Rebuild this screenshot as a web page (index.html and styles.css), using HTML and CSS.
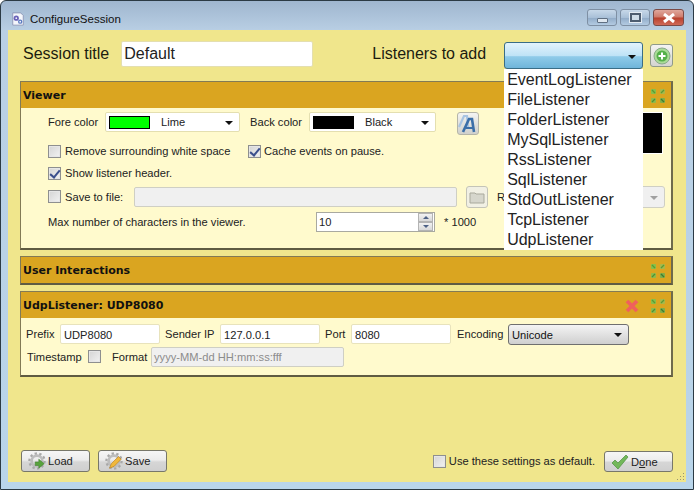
FILE: index.html
```html
<!DOCTYPE html>
<html lang="en">
<head>
    <meta charset="UTF-8">
    <meta name="viewport" content="width=device-width, initial-scale=1.0">
    <title>ConfigureSession</title>
    <link rel="stylesheet" href="styles.css">
</head>
<body>

<svg class="svgDefs" width="0" height="0">
    <defs>
        <symbol id="collapseIcon" viewBox="0 0 16 16">
            <rect x="1" y="1" width="5" height="5" rx="1" fill="#86c04a"/>
            <path d="M2 2l3 3" stroke="#5b9a35" stroke-width="1.200"/>
            <rect x="10" y="1" width="5" height="5" rx="1" fill="#a6b94a"/>
            <path d="M11 5l3-3" stroke="#5b9a35" stroke-width="1.200"/>
            <rect x="1" y="10" width="5" height="5" rx="1" fill="#8ebb4a"/>
            <path d="M2 14l3-3" stroke="#4f8f33" stroke-width="1.200"/>
            <rect x="10" y="10" width="5" height="5" rx="1" fill="#7fae48"/>
            <path d="M11 11l3 3" stroke="#3f7a30" stroke-width="1.200"/>
        </symbol>
        <symbol id="gearIcon" viewBox="0 0 20 20">
            <circle cx="10" cy="10" r="6" fill="none" stroke="#bdbdbd" stroke-width="3"/>
            <circle cx="10" cy="10" r="8.500" fill="none" stroke="#a8a8a8" stroke-width="2.400" stroke-dasharray="2.600 2.700"/>
        </symbol>
    </defs>
</svg>

<div class="window">
    <!-- Title bar -->
    <div class="titleBar">
        <svg class="appIcon" width="14" height="14" viewBox="0 0 16 16">
            <path d="M2 1h9l3 3v11H2z" fill="#f4f6fb" stroke="#8a93b5"/>
            <circle cx="6" cy="7" r="3" fill="#6a62b8"/>
            <circle cx="6" cy="7" r="1" fill="#f4f6fb"/>
            <circle cx="10.500" cy="11" r="2.500" fill="#5a7ac0"/>
            <circle cx="10.500" cy="11" r="1" fill="#f4f6fb"/>
        </svg>
        <span class="titleText">ConfigureSession</span>
        <div class="captionButtons">
            <div class="captionBtn minBtn"><span class="minGlyph"></span></div>
            <div class="captionBtn maxBtn"><span class="maxGlyph"></span></div>
            <div class="captionBtn closeBtn">
                <svg width="14" height="10" viewBox="0 0 14 10"><path d="M2 1l10 8M12 1L2 9" stroke="#fff" stroke-width="3"/></svg>
            </div>
        </div>
    </div>

    <div class="client">
        <!-- Session title and listeners -->
        <div class="topRow">
            <label class="bigLabel">Session title</label>
            <input class="titleInput" type="text" value="Default">
            <label class="bigLabel listenersLabel">Listeners to add</label>
            <div class="listenerCombo">
                <span class="arrow"></span>
                <ul class="listenerList">
                    <li>EventLogListener</li>
                    <li>FileListener</li>
                    <li>FolderListener</li>
                    <li>MySqlListener</li>
                    <li>RssListener</li>
                    <li>SqlListener</li>
                    <li>StdOutListener</li>
                    <li>TcpListener</li>
                    <li>UdpListener</li>
                </ul>
            </div>
            <button class="addBtn">
                <svg width="18" height="18" viewBox="0 0 18 18">
                    <circle cx="9" cy="9" r="8" fill="#a9dc97" stroke="#8aa98a"/>
                    <circle cx="9" cy="9" r="5.500" fill="#55b04a"/>
                    <path d="M9 5.500v7M5.500 9h7" stroke="#fff" stroke-width="2"/>
                </svg>
            </button>
        </div>

        <!-- Viewer -->
        <div class="panel viewerPanel">
            <div class="panelHeader">
                <span class="panelTitle">Viewer</span>
                <svg class="collapse" width="16" height="16"><use href="#collapseIcon"/></svg>
            </div>
            <div class="panelBody viewerBody">
                <div class="viewerPreview"></div>
                <div class="row colorRow">
                    <span class="foreLabel">Fore color</span>
                    <div class="colorCombo foreCombo">
                        <span class="swatch limeSwatch"></span>
                        <span class="colorName">Lime</span>
                        <span class="arrow"></span>
                    </div>
                    <span class="backLabel">Back color</span>
                    <div class="colorCombo backCombo">
                        <span class="swatch blackSwatch"></span>
                        <span class="colorName">Black</span>
                        <span class="arrow"></span>
                    </div>
                    <button class="fontBtn">
                        <svg width="20" height="20" viewBox="0 0 20 20">
                            <path d="M1 13L6 2h3l1 11" fill="none" stroke="#a9c4e2" stroke-width="2.200"/>
                            <path d="M5 18l6-13h3l2 13" fill="none" stroke="#3c6fa8" stroke-width="2.600"/>
                            <path d="M8 14h7" stroke="#3c6fa8" stroke-width="2"/>
                        </svg>
                    </button>
                </div>
                <div class="row checkRow firstCheck">
                    <span class="check"></span>
                    <span class="removeLabel">Remove surrounding white space</span>
                    <span class="check checked"></span>
                    <span>Cache events on pause.</span>
                </div>
                <div class="row checkRow showRow">
                    <span class="check checked"></span>
                    <span>Show listener header.</span>
                </div>
                <div class="row saveRow">
                    <span class="check"></span>
                    <span class="saveLabel">Save to file:</span>
                    <div class="disabledInput fileInput"></div>
                    <button class="folderBtn">
                        <svg width="16" height="14" viewBox="0 0 16 14">
                            <path d="M1 3h5l1 1h8v9H1z" fill="#d6d6cc" stroke="#a9a99c"/>
                        </svg>
                    </button>
                    <span class="rLabel">R</span>
                    <div class="disabledCombo"><span class="arrow greyArrow"></span></div>
                </div>
                <div class="row maxRow">
                    <span class="maxLabel">Max number of characters in the viewer.</span>
                    <div class="spinInput">
                        <span>10</span>
                        <div class="spinBtns">
                            <span class="spinBtn"><i class="spinUp"></i></span>
                            <span class="spinBtn"><i class="spinDown"></i></span>
                        </div>
                    </div>
                    <span class="timesLabel">* 1000</span>
                </div>
            </div>
        </div>

        <!-- User Interactions -->
        <div class="panel collapsedPanel">
            <div class="panelHeader">
                <span class="panelTitle">User Interactions</span>
                <svg class="collapse" width="16" height="16"><use href="#collapseIcon"/></svg>
            </div>
        </div>

        <!-- UdpListener -->
        <div class="panel udpPanel">
            <div class="panelHeader">
                <span class="panelTitle">UdpListener: UDP8080</span>
                <svg class="removeIcon" width="14" height="14" viewBox="0 0 14 14">
                    <path d="M2 2l10 10M12 2L2 12" stroke="#f0605c" stroke-width="3.800"/>
                </svg>
                <svg class="collapse" width="16" height="16"><use href="#collapseIcon"/></svg>
            </div>
            <div class="panelBody udpBody">
                <div class="row udpRow">
                    <span class="prefixLabel">Prefix</span>
                    <div class="textBox">UDP8080</div>
                    <span class="senderLabel">Sender IP</span>
                    <div class="textBox">127.0.0.1</div>
                    <span class="portLabel">Port</span>
                    <div class="textBox">8080</div>
                    <span class="encodingLabel">Encoding</span>
                    <div class="encodingCombo">Unicode<span class="arrow"></span></div>
                </div>
                <div class="row udpRow2">
                    <span class="stampLabel">Timestamp</span>
                    <span class="check"></span>
                    <span class="formatLabel">Format</span>
                    <div class="disabledInput formatInput">yyyy-MM-dd HH:mm:ss:fff</div>
                </div>
            </div>
        </div>

        <div class="spacer"></div>

        <!-- Footer buttons -->
        <div class="footer">
            <button class="winBtn">
                <svg class="btnIcon" width="18" height="18" viewBox="0 0 20 20">
                    <use href="#gearIcon"/>
                    <path d="M8 11h4V8l6 5-6 5v-3H8z" fill="#58a23c" stroke="#3d7d2a" stroke-width=".6"/>
                </svg>
                Load
            </button>
            <button class="winBtn saveBtn">
                <svg class="btnIcon" width="18" height="18" viewBox="0 0 20 20">
                    <use href="#gearIcon"/>
                    <path d="M5 18l2-5 8-8 3 3-8 8z" fill="#f0b83c" stroke="#b97f1e" stroke-width=".7"/>
                </svg>
                Save
            </button>
            <div class="spacer"></div>
            <span class="check"></span>
            <span class="defaultLabel">Use these settings as default.</span>
            <button class="winBtn doneBtn">
                <svg class="btnIcon" width="18" height="16" viewBox="0 0 18 16">
                    <path d="M1 9l3-3 3 3 8-8 2 2L7 15z" fill="#73b85a" stroke="#4f8f40" stroke-width=".7"/>
                </svg>
                <span>D<u>o</u>ne</span>
            </button>
        </div>

        <svg class="grip" width="9" height="9" viewBox="0 0 9 9">
            <path d="M7 1h1v1H7z M4 4h1v1H4z M7 4h1v1H7z M1 7h1v1H1z M4 7h1v1H4z M7 7h1v1H7z" fill="#9a9570"/>
        </svg>
    </div>
</div>

</body>
</html>
```

FILE: styles.css
```css
/* Global Styles */
* {
    box-sizing: border-box;
}

body {
    margin: 0;
    width: 694px;
    height: 490px;
    overflow: hidden;
    background: #fff;
    font-family: 'Liberation Sans', Arial, sans-serif;
    font-size: 11.15px;
    color: #222;
}

.svgDefs {
    position: absolute;
}

.window {
    width: 694px;
    height: 490px;
    display: flex;
    flex-direction: column;
    border: 1px solid #2b3a44;
    border-radius: 6px 6px 0 0;
    background: linear-gradient(to bottom, #9fb6cf 0, #b9cfe4 30px, #b9d5ea 100%);
    padding: 0 7px 7px 7px;
}

/* Title bar */
.titleBar {
    height: 29px;
    flex: none;
    display: flex;
    align-items: center;
    padding-top: 7px;
    padding-left: 3px;
}

.appIcon {
    margin-right: 5px;
}

.titleText {
    font-size: 11.5px;
    color: #111;
}

.captionButtons {
    margin-left: auto;
    margin-right: 2px;
    margin-top: 1px;
    align-self: flex-start;
    display: flex;
    gap: 3px;
}

.captionBtn {
    height: 17px;
    border: 1px solid #7e8fa3;
    border-radius: 3px;
    display: flex;
    align-items: center;
    justify-content: center;
    background: linear-gradient(to bottom, #c7d8e9 0, #a9c0d8 50%, #93adc9 55%, #b3cbe2 100%);
}

.minBtn {
    width: 30px;
}

.maxBtn {
    width: 30px;
}

.closeBtn {
    width: 31px;
    border-color: #7b4a46;
    background: linear-gradient(to bottom, #dfa79c 0, #cf7a6a 48%, #b8402c 52%, #cf6a58 100%);
}

.minGlyph {
    width: 11px;
    height: 5px;
    margin-top: 5px;
    background: #dfe7ef;
    border: 1px solid #5f6f82;
    border-radius: 1px;
}

.maxGlyph {
    width: 11px;
    height: 9px;
    border: 2px solid #4d5d70;
    outline: 1px solid #e3ebf3;
    background: #cfdde9;
}

/* Client area */
.client {
    position: relative;
    flex: 1;
    background: #f0e68c;
    padding: 11px 13px 10px 12px;
    display: flex;
    flex-direction: column;
}

.spacer {
    flex: 1;
}

.topRow {
    display: flex;
    align-items: flex-start;
    height: 40px;
    flex: none;
}

.bigLabel {
    flex: none;
    white-space: nowrap;
    font-size: 16px;
    line-height: 26px;
    color: #1c1c10;
    padding-left: 3px;
}

.titleInput {
    flex: none;
    width: 192px;
    height: 26px;
    margin-left: 12px;
    padding: 0 2px;
    border: 1px solid #e4dfb0;
    border-radius: 2px;
    font-family: 'Liberation Sans', Arial, sans-serif;
    font-size: 16px;
    color: #222;
    outline: none;
}

.listenersLabel {
    margin-left: 56px;
}

.listenerCombo {
    flex: none;
    position: relative;
    width: 139px;
    height: 27px;
    margin-left: 18px;
    margin-top: 1px;
    border: 1px solid #3a6d86;
    border-radius: 3px;
    background: linear-gradient(to bottom, #e3f3fc 0, #bfe3f6 50%, #8fcbe9 55%, #6fb5da 100%);
}

.arrow {
    position: absolute;
    right: 6px;
    top: 50%;
    margin-top: -1px;
    width: 0;
    height: 0;
    border-left: 4px solid transparent;
    border-right: 4px solid transparent;
    border-top: 4px solid #111;
}

.greyArrow {
    border-top-color: #a0a0a0;
}

.listenerList {
    position: absolute;
    left: -1px;
    top: 26px;
    width: 139px;
    height: 181px;
    margin: 0;
    padding: 1px 0 0 3px;
    list-style: none;
    background: #fff;
    font-size: 16px;
    z-index: 5;
}

.listenerList li {
    height: 20px;
    line-height: 20px;
    color: #222;
}

.addBtn {
    flex: none;
    width: 23px;
    height: 23px;
    margin-left: 7px;
    margin-top: 3px;
    padding: 0;
    border: 1px solid #8f9a8a;
    border-radius: 3px;
    background: linear-gradient(to bottom, #f4f4f2, #d4d4d0);
    display: flex;
    align-items: center;
    justify-content: center;
}

/* Panel Styles */
.panel {
    flex: none;
    width: 653px;
    border: 1px solid #827a55;
    border-right: 2px solid #6e6a4c;
    border-bottom: 2px solid #5f5b42;
    background: #fffacd;
    margin-bottom: 6px;
}

.panelHeader {
    height: 26px;
    background: #daa520;
    display: flex;
    align-items: center;
    padding: 1px 5px 0 2px;
}

.panelTitle {
    font-family: 'DejaVu Sans', Verdana, sans-serif;
    font-weight: bold;
    font-size: 11px;
    color: #111;
}

.collapse {
    margin-left: auto;
}

.removeIcon {
    margin-left: auto;
    margin-right: 11px;
}

.removeIcon + .collapse {
    margin-left: 0;
}

.row {
    display: flex;
    align-items: center;
}

/* Viewer */
.viewerBody {
    position: relative;
    height: 140px;
    padding: 4px 0 0 27px;
}

.viewerPreview {
    position: absolute;
    left: 610px;
    top: 4px;
    width: 32px;
    height: 42px;
    background: #000;
    border: 1px solid #fff;
}

.colorRow {
    height: 22px;
    align-items: flex-start;
}

.foreLabel {
    width: 57px;
    line-height: 20px;
}

.backLabel {
    width: 59px;
    margin-left: 10px;
    line-height: 20px;
}

.colorCombo {
    position: relative;
    height: 20px;
    background: #fff;
    border: 1px solid #e4dfb0;
    border-radius: 2px;
    display: flex;
    align-items: center;
    padding-left: 3px;
}

.foreCombo {
    width: 135px;
}

.backCombo {
    width: 127px;
}

.swatch {
    width: 41px;
    height: 13px;
    border: 1px solid #000;
}

.limeSwatch {
    background: #00ff00;
}

.blackSwatch {
    background: #000;
}

.colorName {
    margin-left: 11px;
}

.fontBtn {
    width: 22px;
    height: 23px;
    margin-left: 21px;
    padding: 0;
    border: 1px solid #b5b5a8;
    border-radius: 3px;
    background: linear-gradient(to bottom, #f4f4f2, #d0d0cc);
    display: flex;
    align-items: center;
    justify-content: center;
}

.check {
    position: relative;
    flex: none;
    width: 13px;
    height: 13px;
    border: 1px solid #8e8f8f;
    background: linear-gradient(135deg, #d4d4d4, #f2f2f2);
    box-shadow: inset 0 0 0 1px #e6e6e6;
}

.checked::after {
    content: "";
    position: absolute;
    left: 3px;
    top: 0;
    width: 4px;
    height: 8px;
    border-right: 2px solid #3b4f8c;
    border-bottom: 2px solid #3b4f8c;
    transform: rotate(40deg);
}

.checkRow > span:nth-child(2) {
    margin-left: 4px;
}

.checkRow > span:nth-child(4) {
    margin-left: 3px;
}

.firstCheck {
    height: 18px;
    margin-top: 8px;
}

.removeLabel {
    width: 183px;
}

.showRow {
    height: 18px;
    margin-top: 4px;
}

.saveRow {
    position: relative;
    height: 23px;
    margin-top: 3px;
}

.saveLabel {
    width: 69px;
    margin-left: 4px;
}

.disabledInput {
    background: #f0f0f0;
    border: 1px solid #cfcfc4;
    border-radius: 2px;
    color: #8c8c8c;
}

.fileInput {
    width: 323px;
    height: 20px;
}

.folderBtn {
    width: 22px;
    height: 22px;
    margin-left: 9px;
    padding: 0;
    border: 1px solid #c4c4b8;
    border-radius: 3px;
    background: #f1f0e4;
    display: flex;
    align-items: center;
    justify-content: center;
}

.rLabel {
    width: 7px;
    margin-left: 9px;
    margin-right: 24px;
}

.disabledCombo {
    position: relative;
    width: 137px;
    height: 22px;
    background: #f0f0f0;
    border: 1px solid #cfcfc4;
    border-radius: 3px;
}

.maxRow {
    height: 20px;
    margin-top: 4px;
}

.maxLabel {
    width: 268px;
}

.spinInput {
    position: relative;
    width: 119px;
    height: 20px;
    background: #fff;
    border: 1px solid #a9a9a0;
    padding-left: 2px;
    line-height: 18px;
}

.spinBtns {
    position: absolute;
    right: 1px;
    top: 0;
    width: 15px;
    height: 18px;
    display: flex;
    flex-direction: column;
}

.spinBtn {
    flex: 1;
    border: 1px solid #b4b4b4;
    background: linear-gradient(to bottom, #f2f2f2, #d8d8d8);
    display: flex;
    align-items: center;
    justify-content: center;
}

.spinUp,
.spinDown {
    width: 0;
    height: 0;
    border-left: 3px solid transparent;
    border-right: 3px solid transparent;
}

.spinUp {
    border-bottom: 3px solid #4d6185;
}

.spinDown {
    border-top: 3px solid #4d6185;
}

.timesLabel {
    margin-left: 9px;
}

/* Listener panel */
.udpBody {
    height: 57px;
    padding: 6px 0 0 5px;
}

.udpRow {
    height: 20px;
}

.textBox {
    width: 100px;
    height: 20px;
    line-height: 20px;
    padding-left: 3px;
    background: #fff;
    border: 1px solid #e8e3bc;
    border-radius: 2px;
}

.prefixLabel {
    width: 34px;
}

.senderLabel {
    width: 55px;
    margin-left: 5px;
}

.portLabel {
    width: 26px;
    margin-left: 5px;
}

.encodingLabel {
    width: 51px;
    margin-left: 6px;
}

.encodingCombo {
    position: relative;
    width: 121px;
    height: 21px;
    line-height: 20px;
    padding-left: 3px;
    border: 1px solid #6f6f6f;
    border-radius: 3px;
    background: linear-gradient(to bottom, #f4f4f4, #cfcfcf);
    color: #111;
}

.udpRow2 {
    height: 21px;
    margin-top: 2px;
}

.stampLabel {
    width: 62px;
    padding-left: 1px;
}

.formatLabel {
    width: 39px;
    margin-left: 11px;
}

.formatInput {
    width: 193px;
    height: 20px;
    line-height: 18px;
    padding-left: 2px;
}

/* Footer */
.footer {
    display: flex;
    align-items: center;
    height: 22px;
    flex: none;
    padding-left: 1px;
}

.winBtn {
    display: flex;
    align-items: center;
    width: 69px;
    height: 22px;
    padding: 0 0 0 6px;
    border: 1px solid #77776a;
    border-radius: 3px;
    background: linear-gradient(to bottom, #f6f6f6 0, #ececec 45%, #d6d6d6 55%, #cfcfcf 100%);
    font-family: 'Liberation Sans', Arial, sans-serif;
    font-size: 11.15px;
    color: #222;
}

.btnIcon {
    margin-right: 2px;
}

.saveBtn {
    margin-left: 8px;
}

.doneBtn {
    height: 21px;
    margin-top: 1px;
}

.defaultLabel {
    margin-left: 3px;
    margin-right: 9px;
}

.grip {
    position: absolute;
    right: 1px;
    bottom: 1px;
}
```
